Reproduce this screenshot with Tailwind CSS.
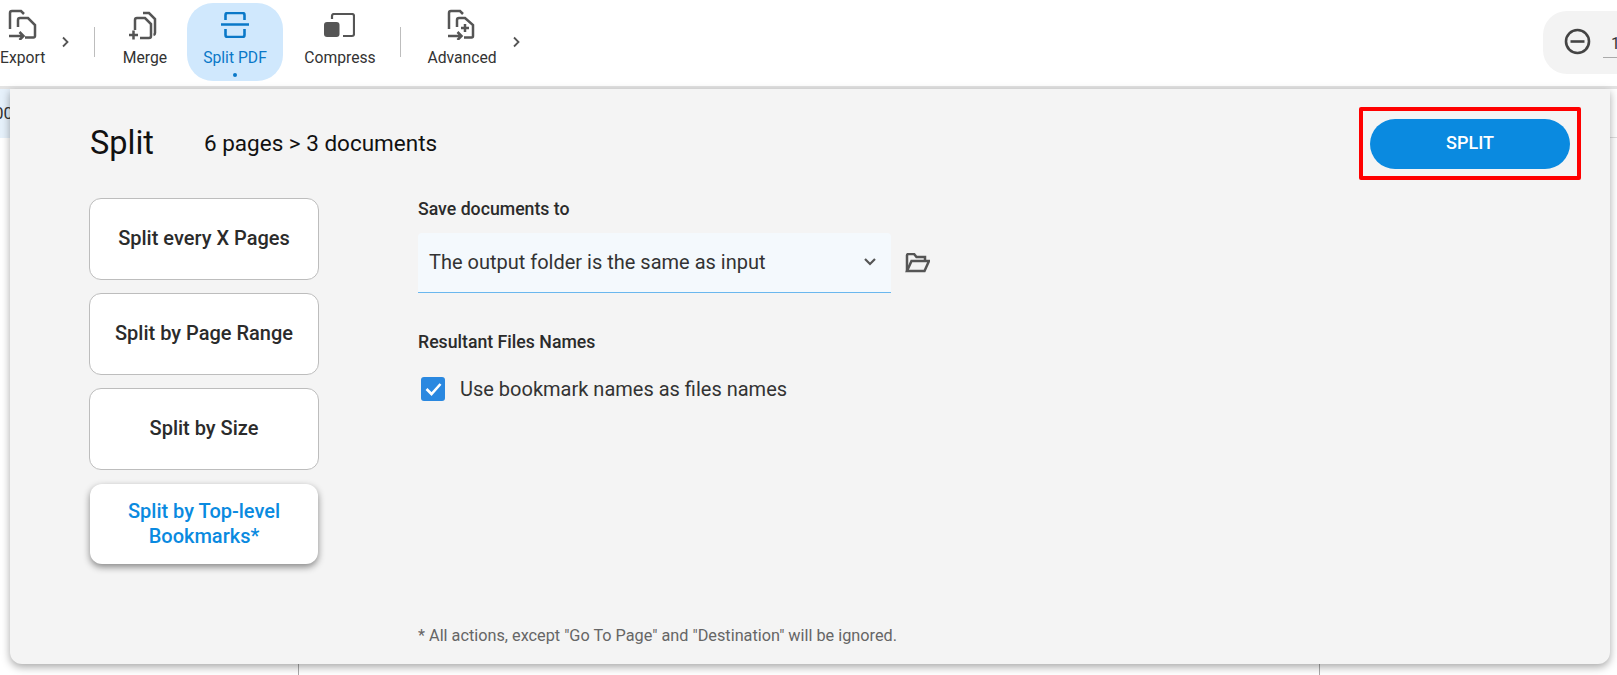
<!DOCTYPE html>
<html lang="en">
<head>
  <meta charset="UTF-8" />
  <title>Split PDF</title>
  <script src="https://cdn.jsdelivr.net/npm/@tailwindcss/browser@4"></script>
</head>
<body class="w-[1617px] h-[675px] overflow-hidden relative bg-white font-['Roboto',sans-serif]">

  <!-- toolbar -->
  <header class="h-[89px] bg-white border-b-[3px] border-[#e3e3e3] flex items-start relative">
    <div class="w-[90px] h-[86px] relative shrink-0">
      <svg class="absolute left-[7px] top-[9px]" width="30" height="31" viewBox="0 0 30 31" fill="none" stroke="#555" stroke-width="2.5">
        <path d="M3 20V4a2 2 0 0 1 2-2h9l3 3"/>
        <path d="M13 9h8l7 7v11a1.500 1.500 0 0 1-1.500 1.500H18M13 9a2 2 0 0 0-2 2v7"/>
        <path d="M2 27h14M12.500 23l4 4-4 4"/>
      </svg>
      <span class="absolute left-0 top-[48px] text-[15.700px] leading-[19px] text-[#333]">Export</span>
      <svg class="absolute left-[61px] top-[36px]" width="9" height="12" viewBox="0 0 9 12" fill="none" stroke="#555" stroke-width="1.800"><path d="M2 1.500 6.500 6 2 10.500"/></svg>
    </div>
    <div class="w-px h-[30px] bg-[#bdbdbd] mt-[27px] mr-[27px] ml-[4px] shrink-0"></div>
    <div class="w-[46px] h-[86px] flex flex-col items-center shrink-0">
      <svg class="mt-[11px] ml-[-4px]" width="30" height="29" viewBox="0 0 30 29" fill="none" stroke="#555" stroke-width="2.5">
        <path d="M15 2h6l6 6v14a2 2 0 0 1-1.500 2"/>
        <path d="M7 19V9a2 2 0 0 1 2-2h8l6 6v12a2 2 0 0 1-2 2H12"/>
        <path d="M1 24h9M5.500 19.500v9"/>
      </svg>
      <span class="mt-[8px] text-[15.700px] leading-[19px] text-[#333] whitespace-nowrap">Merge</span>
    </div>
    <div class="w-[96px] h-[78px] mt-[3px] ml-[19px] rounded-[26px] bg-[#d0e8fd] flex flex-col items-center relative shrink-0">
      <svg class="mt-[9px]" width="28" height="26" viewBox="0 0 28 26" fill="none" stroke="#0a78c8" stroke-width="2.6">
        <path d="M0 12.500h28M4.500 8V3a2 2 0 0 1 2-2h15a2 2 0 0 1 2 2v5M4.500 17v6a2 2 0 0 0 2 2h15a2 2 0 0 0 2-2v-6"/>
      </svg>
      <span class="mt-[10px] text-[15.700px] leading-[19px] text-[#0a78c8] whitespace-nowrap">Split PDF</span>
      <span class="absolute left-[46px] top-[70px] w-[4px] h-[4px] rounded-full bg-[#0a78c8]"></span>
    </div>
    <div class="w-[72px] h-[86px] ml-[21px] flex flex-col items-center shrink-0">
      <svg class="mt-[13px] ml-[-2px]" width="31" height="25" viewBox="0 0 31 25" fill="none">
        <path d="M8 6V3a2 2 0 0 1 2-2h18a2 2 0 0 1 2 2v18a2 2 0 0 1-2 2h-9" stroke="#555" stroke-width="2.200"/>
        <rect x="0" y="9" width="15.500" height="15" rx="3" fill="#555"/>
      </svg>
      <span class="mt-[10px] text-[15.700px] leading-[19px] text-[#333] whitespace-nowrap">Compress</span>
    </div>
    <div class="w-px h-[30px] bg-[#bdbdbd] mt-[27px] ml-[24px] mr-[26px] shrink-0"></div>
    <div class="w-[70px] h-[86px] flex flex-col items-center shrink-0">
      <svg class="mt-[9px] ml-[-3px]" width="29" height="31" viewBox="0 0 29 31" fill="none" stroke="#555" stroke-width="2.5">
        <path d="M3 20V4a2 2 0 0 1 2-2h9l3 3"/>
        <path d="M13 9h6l8 7v11a1.500 1.500 0 0 1-1.500 1.500H18M13 9a2 2 0 0 0-2 2v7"/>
        <path d="M2 27h13M11.500 23l4 4-4 4M15 19h8M19 15v8"/>
      </svg>
      <span class="mt-[8px] text-[15.700px] leading-[19px] text-[#333] whitespace-nowrap">Advanced</span>
    </div>
    <svg class="mt-[36px] ml-[15px] shrink-0" width="9" height="12" viewBox="0 0 9 12" fill="none" stroke="#555" stroke-width="1.800"><path d="M2 1.500 6.500 6 2 10.500"/></svg>

    <div class="absolute left-[1543px] top-[11px] w-[100px] h-[63px] rounded-l-[24px] bg-[#f3f3f3]">
      <svg class="absolute left-[21px] top-[17px]" width="27" height="27" viewBox="0 0 27 27" fill="none" stroke="#444" stroke-width="2.600"><circle cx="13.500" cy="13.500" r="11.500"/><path d="M6.500 13.500h14"/></svg>
      <div class="absolute left-[60px] top-[24px] w-[40px] h-[23px] border-b border-[#aaa] text-[16px] leading-[17px] pl-[8px] text-[#333]">1</div>
    </div>
  </header>

  <!-- page behind the panel -->
  <div class="absolute left-0 top-[89px] w-[10px] h-[49px] bg-[#e6f1fb] overflow-hidden text-[17px] leading-[48px] text-[#333]"><span class="ml-[-6px]">00</span></div>
  <div class="absolute left-[1610px] top-[137px] w-[7px] h-[1px] bg-[#dedede]"></div>
  <div class="absolute left-[298px] top-[660px] w-px h-[15px] bg-[#aaa]"></div>
  <div class="absolute left-[1319px] top-[660px] w-px h-[15px] bg-[#aaa]"></div>

  <!-- split panel -->
  <section class="absolute left-[10px] top-[89px] w-[1600px] h-[575px] bg-[#f4f4f4] rounded-b-[12px] shadow-[0_3px_8px_rgba(0,0,0,0.35)] flex flex-col">
    <div class="h-[109px] flex items-start shrink-0">
      <h1 class="ml-[80px] mt-[35px] text-[32.500px] leading-[38px] font-normal text-[#111]">Split</h1>
      <p class="ml-[50px] mt-[40px] text-[22.500px] leading-[28px] text-[#111]">6 pages &gt; 3 documents</p>
      <div class="ml-auto mr-[29px] mt-[18px] w-[222px] h-[73px] border-[4px] border-[#ff0000] rounded-[2px] flex items-center justify-center">
        <button class="w-[200px] h-[50px] pb-[2px] rounded-full bg-[#0a8ae0] text-white text-[18px] font-medium">SPLIT</button>
      </div>
    </div>

    <div class="flex flex-1 min-h-0">
      <div class="ml-[79px] w-[230px] shrink-0 flex flex-col gap-[13px]">
        <button class="h-[82px] pb-[2px] rounded-[12px] bg-white border border-[#bdbdbd] text-[20px] font-medium text-[#2b2b2b]">Split every X Pages</button>
        <button class="h-[82px] pb-[2px] rounded-[12px] bg-white border border-[#bdbdbd] text-[20px] font-medium text-[#2b2b2b]">Split by Page Range</button>
        <button class="h-[82px] pb-[2px] rounded-[12px] bg-white border border-[#bdbdbd] text-[20px] font-medium text-[#2b2b2b]">Split by Size</button>
        <button class="h-[80px] mt-[1px] mx-[1px] rounded-[12px] bg-white shadow-[0_3px_7px_rgba(0,0,0,0.45)] text-[20px] leading-[25px] font-medium text-[#0a8ae0]">Split by Top-level<br>Bookmarks*</button>
      </div>

      <div class="ml-[99px] flex flex-col flex-1">
        <label class="text-[17.700px] leading-[22px] font-medium text-[#2b2b2b]">Save documents to</label>
        <div class="mt-[13px] flex items-center">
          <div class="w-[473px] h-[60px] pb-[2px] bg-[#f4f9fd] border-b border-[#6ab7ee] rounded-t-[4px] flex items-center justify-between pl-[11px] pr-[14px] text-[20px] text-[#333]">
            <span>The output folder is the same as input</span>
            <svg width="14" height="10" viewBox="0 0 14 10" fill="none" stroke="#555" stroke-width="2.200"><path d="M2 2l5 5 5-5"/></svg>
          </div>
          <svg class="ml-[14px]" width="25" height="20" viewBox="0 0 25 20" fill="none" stroke="#555" stroke-width="2.500">
            <path d="M2 18V2.500A1.500 1.500 0 0 1 3.500 1H9l2.500 3H20v4"/>
            <path d="M2 18l4.500-10H24l-4.500 10z"/>
          </svg>
        </div>
        <label class="mt-[38px] text-[17.700px] leading-[22px] font-medium text-[#2b2b2b]">Resultant Files Names</label>
        <div class="mt-[23px] ml-[3px] flex items-center gap-[15px]">
          <span class="w-[24px] h-[24px] rounded-[3px] bg-[#2a88e0] flex items-center justify-center">
            <svg width="17" height="14" viewBox="0 0 17 14" fill="none" stroke="#fff" stroke-width="2.600"><path d="M1.500 7l5 5 9-10"/></svg>
          </span>
          <span class="text-[20px] leading-[26px] text-[#333]">Use bookmark names as files names</span>
        </div>
        <p class="mt-auto mb-[18px] text-[16.250px] leading-[20px] text-[#666]">* All actions, except "Go To Page" and "Destination" will be ignored.</p>
      </div>
    </div>
  </section>
</body>
</html>
